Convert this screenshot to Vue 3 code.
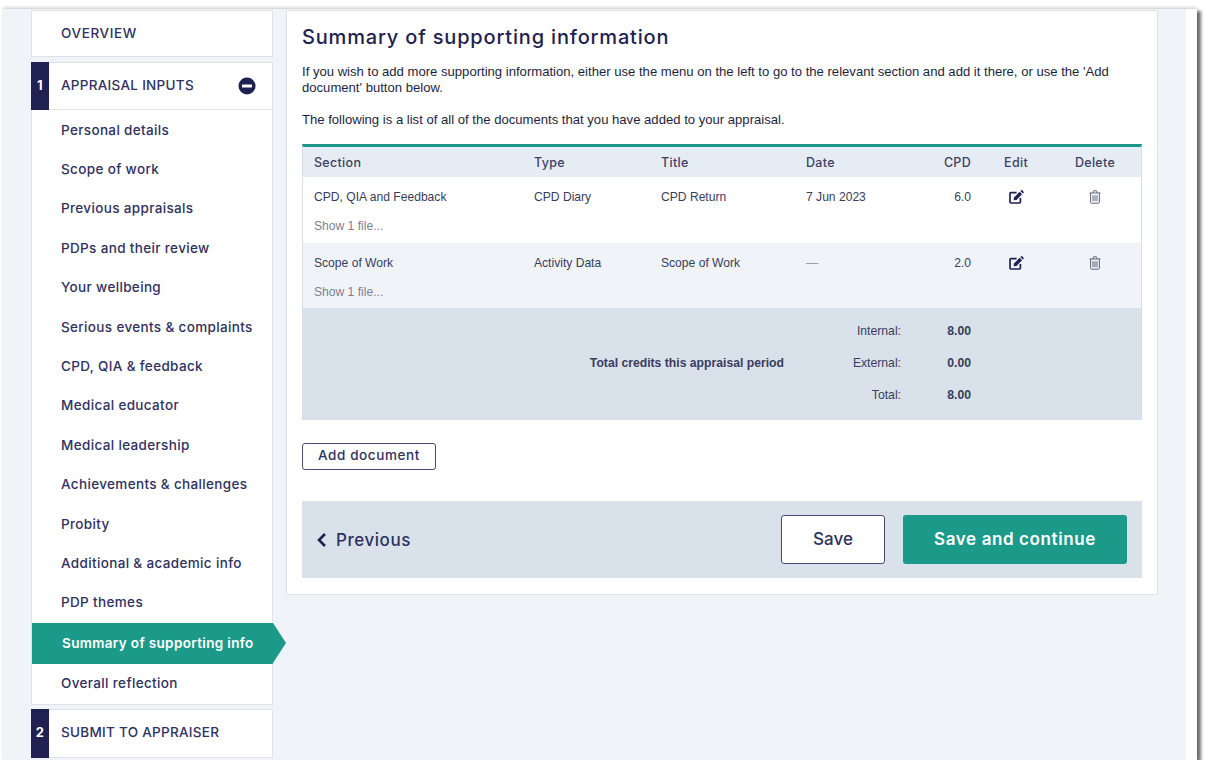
<script setup>
const items = ['Personal details','Scope of work','Previous appraisals','PDPs and their review','Your wellbeing','Serious events & complaints','CPD, QIA & feedback','Medical educator','Medical leadership','Achievements & challenges','Probity','Additional & academic info','PDP themes']
const rows = [
  { section:'CPD, QIA and Feedback', type:'CPD Diary', title:'CPD Return', date:'7 Jun 2023', cpd:'6.0', muted:false, alt:false },
  { section:'Scope of Work', type:'Activity Data', title:'Scope of Work', date:'—', cpd:'2.0', muted:true, alt:true },
]
const totals = [['Internal:','8.00'],['External:','0.00'],['Total:','8.00']]
</script>

<template>
  <div class="frame">
    <div class="page">
      <nav class="side">
        <div class="box overview">OVERVIEW</div>
        <div class="box head first">
          <span class="num">1</span>
          <span class="head-label">APPRAISAL INPUTS</span>
          <svg class="minus" width="18" height="18" viewBox="0 0 18 18"><circle cx="9" cy="9" r="8.5" fill="#1f2150"/><rect x="4" y="7.4" width="10" height="3.2" rx="0.6" fill="#fff"/></svg>
        </div>
        <ul class="list">
          <li v-for="i in items" :key="i" class="item">{{ i }}</li>
          <li class="item active">Summary of supporting info</li>
          <li class="item last">Overall reflection</li>
        </ul>
        <div class="box head submit">
          <span class="num">2</span>
          <span class="head-label">SUBMIT TO APPRAISER</span>
        </div>
      </nav>
      <main class="card">
        <h1 class="title">Summary of supporting information</h1>
        <p class="intro">If you wish to add more supporting information, either use the menu on the left to go to the relevant section and add it there, or use the 'Add document' button below.</p>
        <p class="intro second">The following is a list of all of the documents that you have added to your appraisal.</p>
        <table class="docs">
          <colgroup>
            <col style="width:220px"><col style="width:127px"><col style="width:145px"><col style="width:100px"><col style="width:76px"><col style="width:90px"><col style="width:80px">
          </colgroup>
          <thead>
            <tr>
              <th>Section</th><th>Type</th><th>Title</th><th>Date</th><th class="r">CPD</th><th class="c">Edit</th><th class="c del">Delete</th>
            </tr>
          </thead>
          <tbody>
            <tr v-for="r in rows" :key="r.section" :class="{ alt: r.alt }">
              <td><div>{{ r.section }}</div><div class="show">Show 1 file...</div></td>
              <td>{{ r.type }}</td>
              <td>{{ r.title }}</td>
              <td :class="{ muted: r.muted }">{{ r.date }}</td>
              <td class="r">{{ r.cpd }}</td>
              <td class="c">
                <svg width="15" height="14" viewBox="0 0 15 14"><path d="M7.6 2.6H1.9A.9.9 0 0 0 1 3.5v8.6a.9.9 0 0 0 .9.9h8.6a.9.9 0 0 0 .9-.9V8" fill="none" stroke="#1f2150" stroke-width="1.7"/><path d="M5 7.4 10.6 1.8l2.5 2.5L7.5 9.9 4.6 10.3z" fill="#1f2150"/><path d="M11.4 1 12.2.3a.8.8 0 0 1 1 0l1.4 1.4a.8.8 0 0 1 0 1l-.7.8z" fill="#1f2150"/></svg>
              </td>
              <td class="c del">
                <svg width="12" height="14" viewBox="0 0 12 14"><path d="M.5 3h11M4 3V1.4L4.8.8h2.4l.8.6V3M1.6 3v9.2l.8 1h7.2l.8-1V3" fill="none" stroke="#5b6478" stroke-width="1"/><path d="M4 5.2v6M6 5.2v6M8 5.2v6" stroke="#5b6478" stroke-width="1"/></svg>
              </td>
            </tr>
          </tbody>
          <tfoot>
            <tr>
              <td colspan="7" class="tot">
                <div class="tot-grid">
                  <div class="tot-label">Total credits this appraisal period</div>
                  <template v-for="t in totals" :key="t[0]">
                    <div class="r tot-cell">{{ t[0] }}</div>
                    <div class="r tot-cell strong">{{ t[1] }}</div>
                  </template>
                </div>
              </td>
            </tr>
          </tfoot>
        </table>
        <button class="add">Add document</button>
        <div class="bar">
          <span class="prev">
            <svg width="11" height="16" viewBox="0 0 11 16"><path d="M9 2 3 8l6 6" fill="none" stroke="#1f2150" stroke-width="2.6"/></svg>
            Previous
          </span>
          <button class="save">Save</button>
          <button class="go">Save and continue</button>
        </div>
      </main>
    </div>
    <div class="strip"></div>
  </div>
</template>

<style>
html, body { background: #fff; overflow: hidden; }
</style>

<style scoped>
.frame {
  margin: 9px 0 0 3px;
  width: 1194px;
  height: 751px;
  display: flex;
  background: #fff;
  box-shadow: 4px 2px 3px rgba(0,0,0,.55), 0 -2px 3px rgba(0,0,0,.14);
}
.page {
  flex: 1;
  display: flex;
  gap: 13px;
  padding: 1px 28px 0;
  background: #f0f4f8;
  overflow: hidden;
}
.strip { width: 11px; }
.side {
  width: 242px;
  flex: none;
  display: flex;
  flex-direction: column;
  font-family: "Inter", "Liberation Sans", sans-serif;
  color: #2f3160;
}
.box {
  background: #fff;
  border: 1px solid #dfe3e8;
  display: flex;
  align-items: center;
}
.overview {
  height: 47px;
  padding: 0 0 2px 29px;
  font-size: 13.5px;
  font-weight: 500;
  letter-spacing: .6px;
  margin-bottom: 5px;
  box-sizing: border-box;
}
.head {
  box-sizing: border-box;
  font-size: 13.5px;
  font-weight: 500;
  letter-spacing: .28px;
}
.head.first { height: 48px; }
.num {
  width: 18px;
  align-self: stretch;
  margin: -1px 0 -1px -1px;
  background: #1f2150;
  color: #fff;
  font-size: 13px;
  font-weight: 700;
  display: flex;
  align-items: center;
  justify-content: center;
  padding-bottom: 3px;
  box-sizing: border-box;
}
.head-label { margin-left: 12px; flex: 1; padding-bottom: 2px; }
.minus { margin-right: 16px; }
.list {
  list-style: none;
  margin: 0 0 4px;
  padding: .6px 0 0;
  background: #fff;
  border-left: 1px solid #dfe3e8;
  border-right: 1px solid #dfe3e8;
  border-bottom: 1px solid #dfe3e8;
  font-size: 13.5px;
  font-weight: 500;
  letter-spacing: .35px;
}
.item {
  height: 39.4px;
  line-height: 39.4px;
  padding-left: 29px;
  white-space: nowrap;
}
.item.last { height: 39.7px; line-height: 39.7px; }
.item.active {
  position: relative;
  height: 41.4px;
  line-height: 40px;
  background: #1b9a89;
  color: #fff;
  font-weight: 600;
  font-size: 13.5px;
  letter-spacing: .35px;
  padding-left: 30px;
  margin-right: -1px;
}
.item.active::after {
  content: "";
  position: absolute;
  left: 100%;
  top: 0;
  border-left: 13px solid #1b9a89;
  border-top: 20.7px solid transparent;
  border-bottom: 20.7px solid transparent;
}
.submit { height: 49px; }
.card {
  width: 872px;
  height: 585px;
  flex: none;
  box-sizing: border-box;
  background: #fff;
  border: 1px solid #dfe3e8;
  padding: 0 15px;
  color: #20224a;
}
.title {
  margin: 13px 0 0;
  height: 26px;
  line-height: 26px;
  font-family: "Inter", "Liberation Sans", sans-serif;
  font-size: 20px;
  font-weight: 500;
  letter-spacing: .82px;
  color: #1f2150;
}
.intro {
  margin: 14px 0 0;
  font-family: "Liberation Sans", Arial, sans-serif;
  font-size: 13.1px;
  line-height: 16px;
  color: #1d1f3f;
}
.intro.second { margin-top: 16px; }
.docs {
  margin-top: 16px;
  width: 840px;
  table-layout: fixed;
  border-collapse: separate;
  border-spacing: 0;
  border-top: 3px solid #1b9a89;
  border-left: 1px solid #d6dde6;
  border-right: 1px solid #d6dde6;
  border-bottom: 1px solid #d6dde6;
  font-family: "Liberation Sans", Arial, sans-serif;
  font-size: 12.1px;
  color: #3a3c5c;
}
th {
  height: 30px;
  padding: 0 0 0 11px;
  background: #e6ecf4;
  font-family: "Inter", "Liberation Sans", sans-serif;
  font-size: 12.5px;
  font-weight: 500;
  letter-spacing: .3px;
  text-align: left;
  color: #3d3f63;
}
tbody td {
  height: 66px;
  box-sizing: border-box;
  padding: 13px 0 0 11px;
  vertical-align: top;
  background: #fff;
}
tbody tr.alt td { background: #f0f4f9; height: 65px; }
.show { margin-top: 15px; color: #7c8092; }
.muted { color: #9aa0ad; }
.r { text-align: right; }
.c { text-align: center; }
th.c, tbody td.c { padding-left: 0; }
th.del, tbody td.del { padding-right: 12px; }
td.c svg { display: inline-block; }
.tot {
  padding: 0;
  background: #d9e1eb;
}
.tot-grid {
  display: grid;
  grid-template-columns: 481px 117px 70px;
  grid-template-rows: repeat(3, 32px);
  align-items: center;
  padding: 7px 0 8px;
  font-size: 12.2px;
  color: #3a3c5c;
}
.tot-label {
  grid-row: 1 / 4;
  grid-column: 1;
  text-align: right;
  font-weight: 700;
}
.tot-cell:nth-child(even) { grid-column: 2; }
.tot-cell:nth-child(odd) { grid-column: 3; }
.strong { font-weight: 700; }
button { font-family: "Inter", "Liberation Sans", sans-serif; cursor: pointer; }
.add {
  display: block;
  margin-top: 23px;
  width: 134px;
  height: 27px;
  background: #fff;
  border: 1.5px solid #4a4c75;
  border-radius: 3px;
  font-size: 13.5px;
  font-weight: 500;
  letter-spacing: .6px;
  color: #2f3160;
  padding: 0 0 3px;
}
.bar {
  margin-top: 31px;
  width: 840px;
  height: 77px;
  box-sizing: border-box;
  background: #d9e1eb;
  display: flex;
  align-items: center;
  padding: 0 15px 0 14px;
  gap: 18px;
}
.prev {
  flex: 1;
  display: flex;
  align-items: center;
  gap: 9px;
  font-family: "Inter", "Liberation Sans", sans-serif;
  font-size: 17px;
  font-weight: 500;
  letter-spacing: .55px;
  color: #2f3160;
}
.save, .go {
  height: 49px;
  border-radius: 3px;
  font-size: 17px;
  padding: 0 0 2px;
}
.save {
  width: 104px;
  background: #fff;
  border: 1.5px solid #4a4c75;
  font-weight: 500;
  color: #2f3160;
}
.go {
  width: 224px;
  background: #1b9a89;
  border: 0;
  color: #fff;
  font-weight: 600;
  letter-spacing: .6px;
}
</style>
